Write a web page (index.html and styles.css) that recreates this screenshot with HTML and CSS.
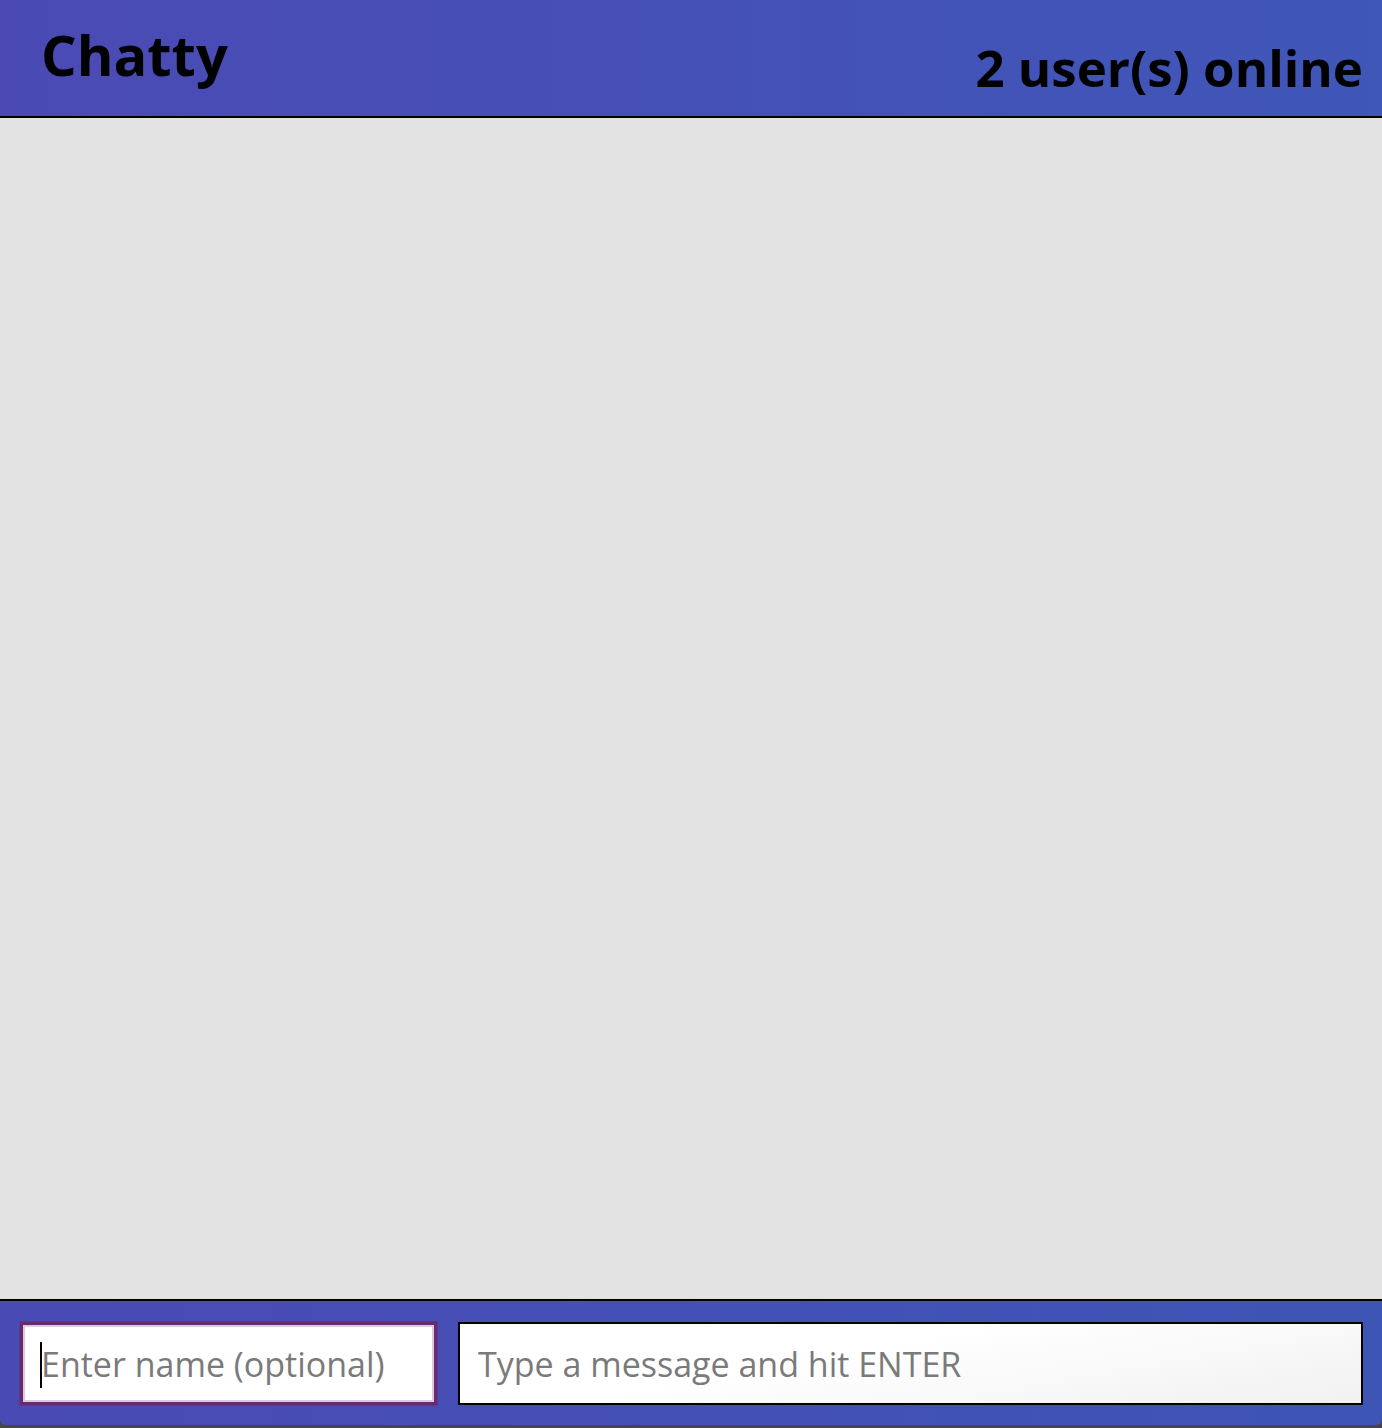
FILE: index.html
```
<!DOCTYPE html>
<html>
<head>
<meta charset="utf-8" />
<title>Chatty</title>
<link rel="stylesheet" href="styles.css">
</head>
<body>
<div id="app">
	<div class="navbar">
		<h1 class="brand">Chatty</h1>
		<h2 class="online">2 user(s) online</h2>
	</div>
	<div class="messages"></div>
	<div class="chatbar">
		<div class="namebox">
			<input class="username" type="text" placeholder="Enter name (optional)" />
			<span class="caret"></span>
		</div>
		<input class="message" type="text" placeholder="Type a message and hit ENTER" />
	</div>
</div>
</body>
</html>
```

FILE: styles.css
```
html, body {
	margin: 0;
	padding: 0;
	height: 100%;
}
body {
	font-family: "Open Sans", sans-serif;
	background-color: #46464c;
}
div#app {
	height: 1425px;
	display: flex;
	flex-direction: column;
}
.navbar {
	height: 116px;
	border-bottom: 2px solid black;
	background: linear-gradient(to right, #4b4ab5, #3f57b8);
	display: flex;
	justify-content: space-between;
	padding: 0 19px 0 41px;
}
.brand {
	margin: 24px 0 0;
	font-size: 56px;
	font-weight: bold;
	line-height: 1.1;
}
.online {
	margin: 39px 0 0;
	font-size: 51px;
	font-weight: bold;
	line-height: 1.1;
}
.messages {
	flex: 1;
	background-color: #e3e3e3;
}
.chatbar {
	box-sizing: border-box;
	height: 126px;
	border-top: 2px solid black;
	background: linear-gradient(to right, #4a4ab4, #3d55b5);
	border-radius: 0 0 6px 6px;
	display: flex;
	align-items: flex-start;
	padding: 21px 19px 0 20px;
	gap: 21px;
}
.chatbar input {
	box-sizing: border-box;
	height: 83px;
	font-family: "Open Sans", sans-serif;
	font-size: 34px;
	padding: 0 18px;
	outline: none;
	color: black;
}
.chatbar input::placeholder {
	color: #7a7a7a;
}
.namebox {
	position: relative;
	width: 417px;
	display: flex;
}
.username {
	width: 100%;
	border: 3px solid #692a70;
	box-shadow: inset 0 0 0 2px #dccae0, 0 0 0 1px #5a3a8a;
	background: white;
}
.caret {
	position: absolute;
	left: 20px;
	top: 20px;
	width: 2px;
	height: 46px;
	background: black;
}
.message {
	flex: 1;
	border: 2px solid black;
	background: linear-gradient(170deg, #ffffff 40%, #f1f1f1);
}
```
